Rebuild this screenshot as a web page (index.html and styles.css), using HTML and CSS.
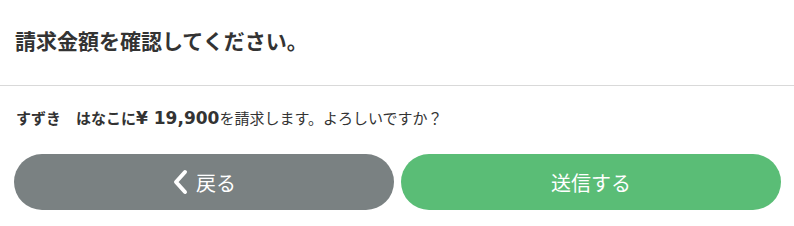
FILE: index.html
```html
<!DOCTYPE html>
<html lang="ja">
<head>
    <meta charset="UTF-8">
    <title>請求金額の確認</title>
    <link rel="stylesheet" href="styles.css">
</head>
<body>

    <!-- Header -->
    <header class="modal-header">
        <h1>請求金額を確認してください。</h1>
    </header>

    <!-- Body -->
    <div class="modal-body">
        <p><strong>すずき　はなこに<span class="amount">¥ 19,900</span></strong>を請求します。よろしいですか？</p>
    </div>

    <!-- Buttons -->
    <div class="modal-actions">
        <button class="btn btn-back">
            <svg class="chevron" width="16" height="26" viewBox="0 0 16 26">
                <path d="M13 3 L4 13 L13 23" fill="none" stroke="#fff" stroke-width="4" stroke-linecap="round" stroke-linejoin="round"/>
            </svg>
            戻る
        </button>
        <button class="btn btn-send">送信する</button>
    </div>

</body>
</html>
```

FILE: styles.css
```css
/* General page styles */
body, html {
    margin: 0;
    padding: 0;
    background-color: #fff;
    color: #333;
    font-family: "DejaVu Sans", "Noto Sans CJK JP", sans-serif;
}

/* Header */
.modal-header {
    padding: 22px 15px 0;
    height: 63px;
    border-bottom: 1px solid #d9d9d9;
}

.modal-header h1 {
    margin: 0;
    font-family: "Noto Sans CJK JP", sans-serif;
    font-size: 21px;
    line-height: 36px;
    font-weight: bold;
}

/* Message */
.modal-body {
    padding: 20px 16px 0;
}

.modal-body p {
    margin: 0;
    font-size: 15px;
    line-height: 26px;
}

.amount {
    font-size: 17px;
    line-height: 1;
}

/* Buttons */
.modal-actions {
    display: flex;
    gap: 7px;
    padding: 22px 13px 0 14px;
}

.btn {
    flex: 1;
    height: 56px;
    border: none;
    border-radius: 28px;
    color: #fff;
    font-family: "Noto Sans CJK JP", sans-serif;
    font-size: 20px;
    display: flex;
    justify-content: center;
    align-items: center;
    gap: 8px;
    cursor: pointer;
}

.btn-back {
    background-color: #7a8182;
}

.btn-send {
    background-color: #5abd76;
}
```
